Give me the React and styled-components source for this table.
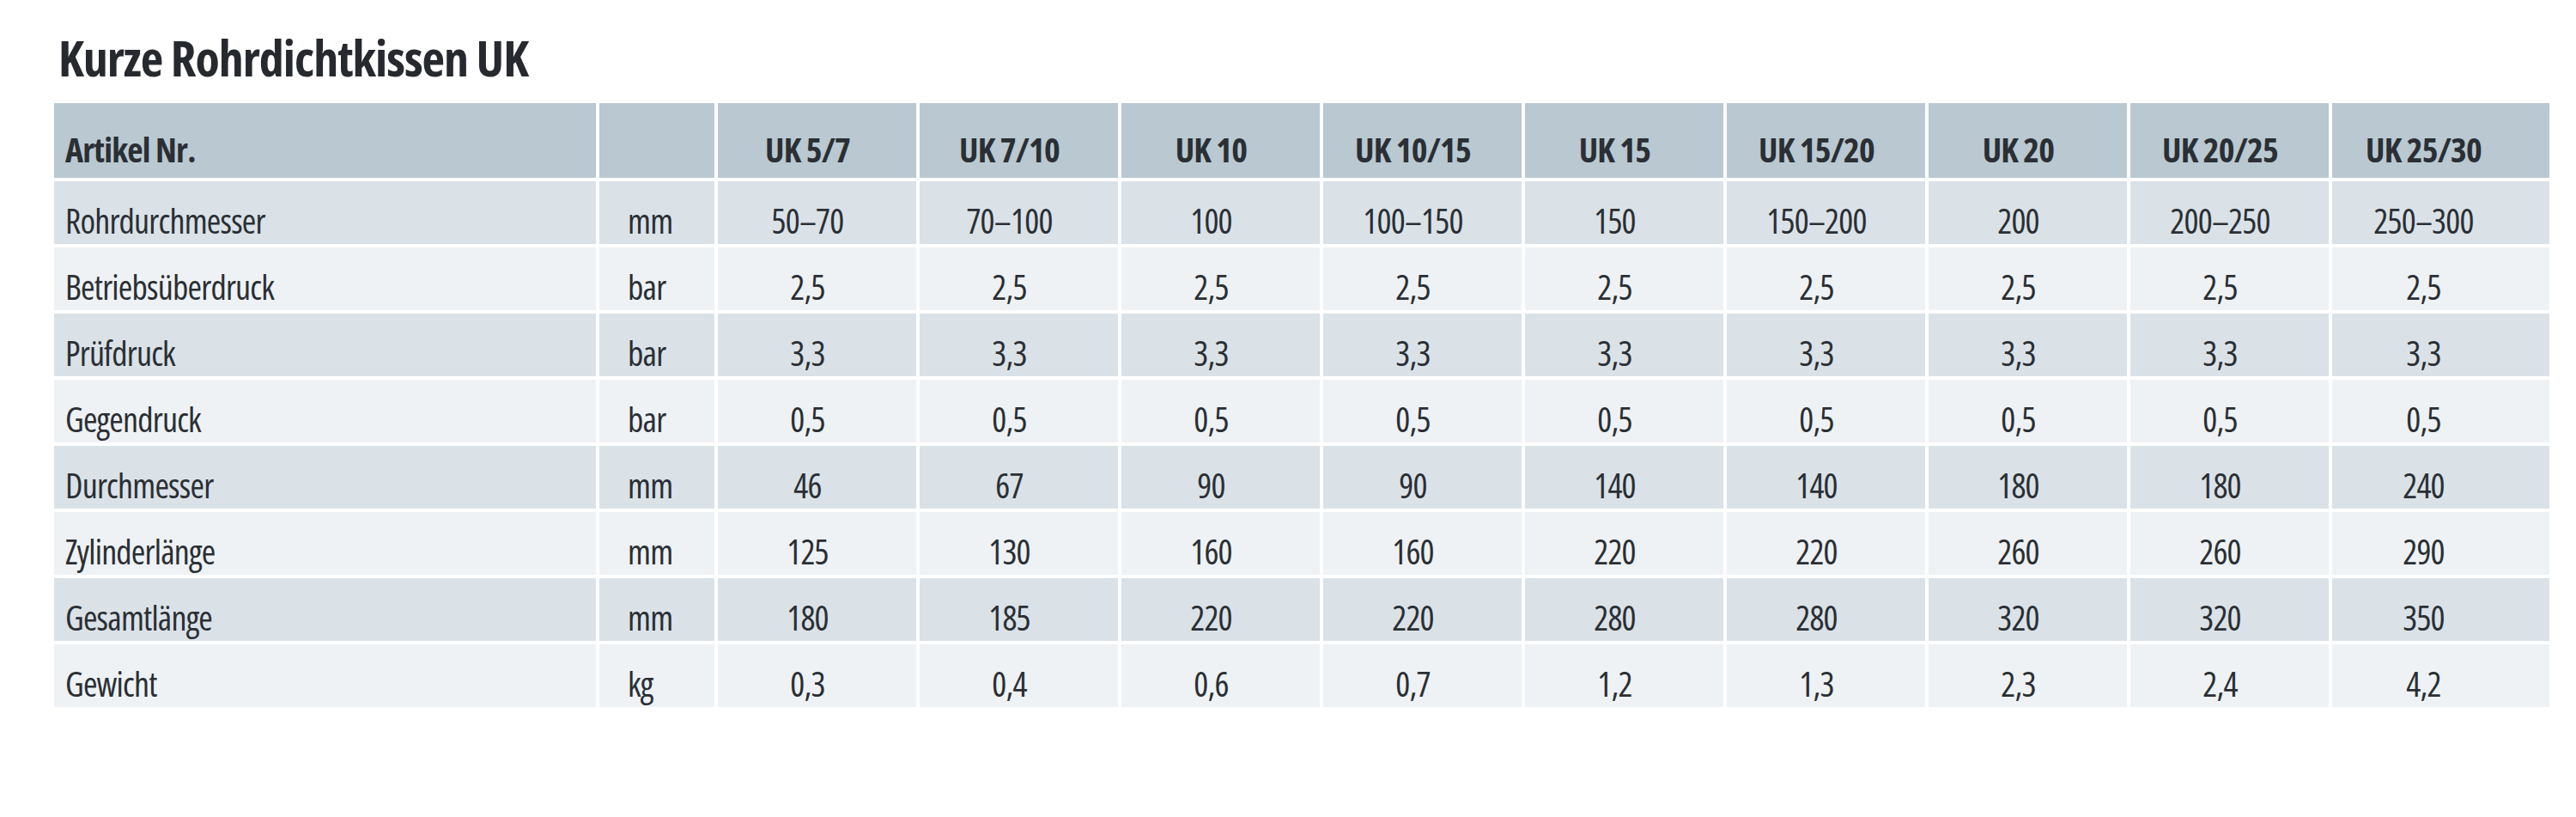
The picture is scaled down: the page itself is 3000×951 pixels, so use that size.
import React from 'react'
import styled, { createGlobalStyle } from 'styled-components';

const GlobalStyle = createGlobalStyle`
    html, body {
        margin: 0;
        padding: 0;
        background: #ffffff;
    }
    body {
        font-family: "Open Sans", "DejaVu Sans Condensed", sans-serif;
        font-stretch: 75%;
        color: #2b2f34;
    }
`;

const Page = styled.div`
    width: 3000px;
    height: 951px;
    padding: 38px 31px 0 63px;
    box-sizing: border-box;
`;

const Title = styled.h1`
    margin: 0 0 24px 5px;
    font-size: 58px;
    line-height: 1;
    font-weight: 700;
    font-stretch: 75%;
    letter-spacing: -1px;
    color: #26292e;
`;

const Table = styled.div`
    display: grid;
    grid-template-columns: 631px 134px repeat(8, 231px) 1fr;
    grid-auto-rows: 73px;
    grid-template-rows: 87px;
    gap: 4px;
`;

const Cell = styled.div`
    display: flex;
    align-items: center;
    box-sizing: border-box;
    line-height: 1;
    white-space: nowrap;
    background: ${p => p.$tone === 'head' ? '#b9c8d1' : p.$tone === 'dark' ? '#dae2e8' : '#eef2f5'};
    font-size: 40px;
    font-weight: ${p => p.$tone === 'head' ? 700 : 400};
    letter-spacing: -0.8px;
    padding-top: ${p => p.$tone === 'head' ? '20px' : '18px'};
    justify-content: ${p => p.$align === 'center' ? 'center' : 'flex-start'};
    padding-left: ${p => p.$indent || 0}px;
    padding-right: ${p => p.$align === 'center' ? '22px' : '0'};

    &:nth-child(11n) {
        padding-right: 40px;
    }
`;

const sizes = ['UK 5/7', 'UK 7/10', 'UK 10', 'UK 10/15', 'UK 15', 'UK 15/20', 'UK 20', 'UK 20/25', 'UK 25/30'];

const rows = [
    ['Rohrdurchmesser', 'mm', ['50–70', '70–100', '100', '100–150', '150', '150–200', '200', '200–250', '250–300']],
    ['Betriebsüberdruck', 'bar', ['2,5', '2,5', '2,5', '2,5', '2,5', '2,5', '2,5', '2,5', '2,5']],
    ['Prüfdruck', 'bar', ['3,3', '3,3', '3,3', '3,3', '3,3', '3,3', '3,3', '3,3', '3,3']],
    ['Gegendruck', 'bar', ['0,5', '0,5', '0,5', '0,5', '0,5', '0,5', '0,5', '0,5', '0,5']],
    ['Durchmesser', 'mm', ['46', '67', '90', '90', '140', '140', '180', '180', '240']],
    ['Zylinderlänge', 'mm', ['125', '130', '160', '160', '220', '220', '260', '260', '290']],
    ['Gesamtlänge', 'mm', ['180', '185', '220', '220', '280', '280', '320', '320', '350']],
    ['Gewicht', 'kg', ['0,3', '0,4', '0,6', '0,7', '1,2', '1,3', '2,3', '2,4', '4,2']],
];

function App() {
    return (
        <>
        <GlobalStyle/>
        <Page>
            <Title>Kurze Rohrdichtkissen UK</Title>
            <Table>
                <Cell $tone="head" $indent={13}>Artikel Nr.</Cell>
                <Cell $tone="head"/>
                {sizes.map(s => (
                    <Cell key={s} $tone="head" $align="center">{s}</Cell>
                ))}
                {rows.map(([label, unit, values], i) => {
                    const tone = i % 2 === 0 ? 'dark' : 'light';
                    return (
                        <React.Fragment key={label}>
                            <Cell $tone={tone} $indent={13}>{label}</Cell>
                            <Cell $tone={tone} $indent={33}>{unit}</Cell>
                            {values.map((v, j) => (
                                <Cell key={j} $tone={tone} $align="center">{v}</Cell>
                            ))}
                        </React.Fragment>
                    );
                })}
            </Table>
        </Page>
        </>
    )
}

export default App
